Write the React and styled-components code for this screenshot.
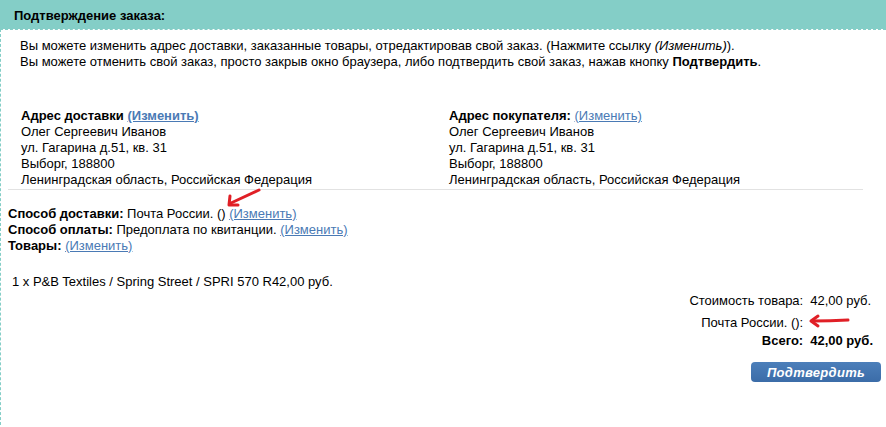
import React from 'react';
import styled, { createGlobalStyle } from 'styled-components';

const GlobalStyle = createGlobalStyle`
  body {
    margin: 0;
    background: #fff;
    font-family: 'Liberation Sans', Arial, sans-serif;
    font-size: 13px;
    color: #000;
  }
`;

const Page = styled.div`
  position: relative;
  width: 886px;
  height: 427px;
  overflow: hidden;
`;

const Header = styled.div`
  height: 29px;
  background: #84cec7;
  padding-left: 14px;
  font-weight: bold;
  line-height: 32px;
`;

const Content = styled.div`
  border-top: 1px dashed #84cec7;
  border-left: 1px dashed #84cec7;
  height: 400px;
  line-height: 16px;
`;

const Intro = styled.p`
  margin: 0;
  padding: 8px 0 0 19px;
`;

const Addresses = styled.div`
  display: grid;
  grid-template-columns: 428px 1fr;
  margin: 38px 23px 0 7px;
  padding-left: 13px;
  padding-bottom: 1px;
  border-bottom: 1px solid #e2e2e2;
`;

const Block = styled.div`
  display: flex;
  flex-direction: column;
`;

const Link = styled.a`
  color: #4a7ab5;
  text-decoration: underline;
  font-weight: ${(p) => (p.bold ? 'bold' : 'normal')};
  cursor: pointer;
`;

const Info = styled.div`
  margin-top: 16px;
  padding-left: 7px;
`;

const Item = styled.div`
  margin-top: 20px;
  padding-left: 11px;
`;

const Totals = styled.div`
  display: grid;
  grid-template-columns: 1fr auto;
  column-gap: 7px;
  margin: 3px 13px 0 0;
  white-space: nowrap;
`;

const Label = styled.div`
  text-align: right;
  font-weight: ${(p) => (p.bold ? 'bold' : 'normal')};
  padding-top: ${(p) => p.gap || 0}px;
`;

const Value = styled.div`
  font-weight: ${(p) => (p.bold ? 'bold' : 'normal')};
  padding-top: ${(p) => p.gap || 0}px;
`;

const Actions = styled.div`
  display: flex;
  justify-content: flex-end;
  margin: 13px 5px 0 0;
`;

const Button = styled.button`
  width: 130px;
  height: 20px;
  border: none;
  border-radius: 4px;
  background: linear-gradient(#4c7fba, #3b6ca8);
  color: #fff;
  font-family: 'Liberation Sans', Arial, sans-serif;
  font-size: 13px;
  font-weight: bold;
  font-style: italic;
  padding: 0;
  letter-spacing: 0.3px;
`;

const Arrow = styled.svg`
  position: absolute;
  overflow: visible;
`;

export default function App() {
  return (
    <Page>
      <GlobalStyle />
      <Header>Подтверждение заказа:</Header>
      <Content>
        <Intro>
          Вы можете изменить адрес доставки, заказанные товары, отредактировав свой заказ. (Нажмите ссылку <i>(Изменить)</i>).
          <br />
          Вы можете отменить свой заказ, просто закрыв окно браузера, либо подтвердить свой заказ, нажав кнопку <b>Подтвердить</b>.
        </Intro>

        <Addresses>
          <Block>
            <div>
              <b>Адрес доставки</b> <Link bold>(Изменить)</Link>
            </div>
            <span>Олег Сергеевич Иванов</span>
            <span>ул. Гагарина д.51, кв. 31</span>
            <span>Выборг, 188800</span>
            <span>Ленинградская область, Российская Федерация</span>
          </Block>
          <Block>
            <div>
              <b>Адрес покупателя:</b> <Link>(Изменить)</Link>
            </div>
            <span>Олег Сергеевич Иванов</span>
            <span>ул. Гагарина д.51, кв. 31</span>
            <span>Выборг, 188800</span>
            <span>Ленинградская область, Российская Федерация</span>
          </Block>
        </Addresses>

        <Info>
          <div>
            <b>Способ доставки:</b> Почта России. () <Link>(Изменить)</Link>
          </div>
          <div>
            <b>Способ оплаты:</b> Предоплата по квитанции. <Link>(Изменить)</Link>
          </div>
          <div>
            <b>Товары:</b> <Link>(Изменить)</Link>
          </div>
        </Info>

        <Item>1 x P&amp;B Textiles / Spring Street / SPRI 570 R42,00 руб.</Item>

        <Totals>
          <Label>Стоимость товара:</Label>
          <Value>42,00 руб.</Value>
          <Label gap={6}>Почта России. ():</Label>
          <Value gap={6} />
          <Label bold gap={2}>Всего:</Label>
          <Value bold gap={2}>42,00 руб.</Value>
        </Totals>

        <Actions>
          <Button>Подтвердить</Button>
        </Actions>
      </Content>

      <Arrow style={{ left: 226, top: 188 }} width="36" height="22">
        <path d="M33 2 Q20 8 5 15" stroke="#e01f26" strokeWidth="3" fill="none" strokeLinecap="round" />
        <path d="M3 17 L4 8 M3 17 L12 17" stroke="#e01f26" strokeWidth="3" fill="none" strokeLinecap="round" />
      </Arrow>
      <Arrow style={{ left: 808, top: 313 }} width="42" height="16">
        <path d="M40 7 Q22 8 5 8" stroke="#e01f26" strokeWidth="3" fill="none" strokeLinecap="round" />
        <path d="M3 8 L10 3 M3 8 L10 13" stroke="#e01f26" strokeWidth="3" fill="none" strokeLinecap="round" />
      </Arrow>
    </Page>
  );
}
